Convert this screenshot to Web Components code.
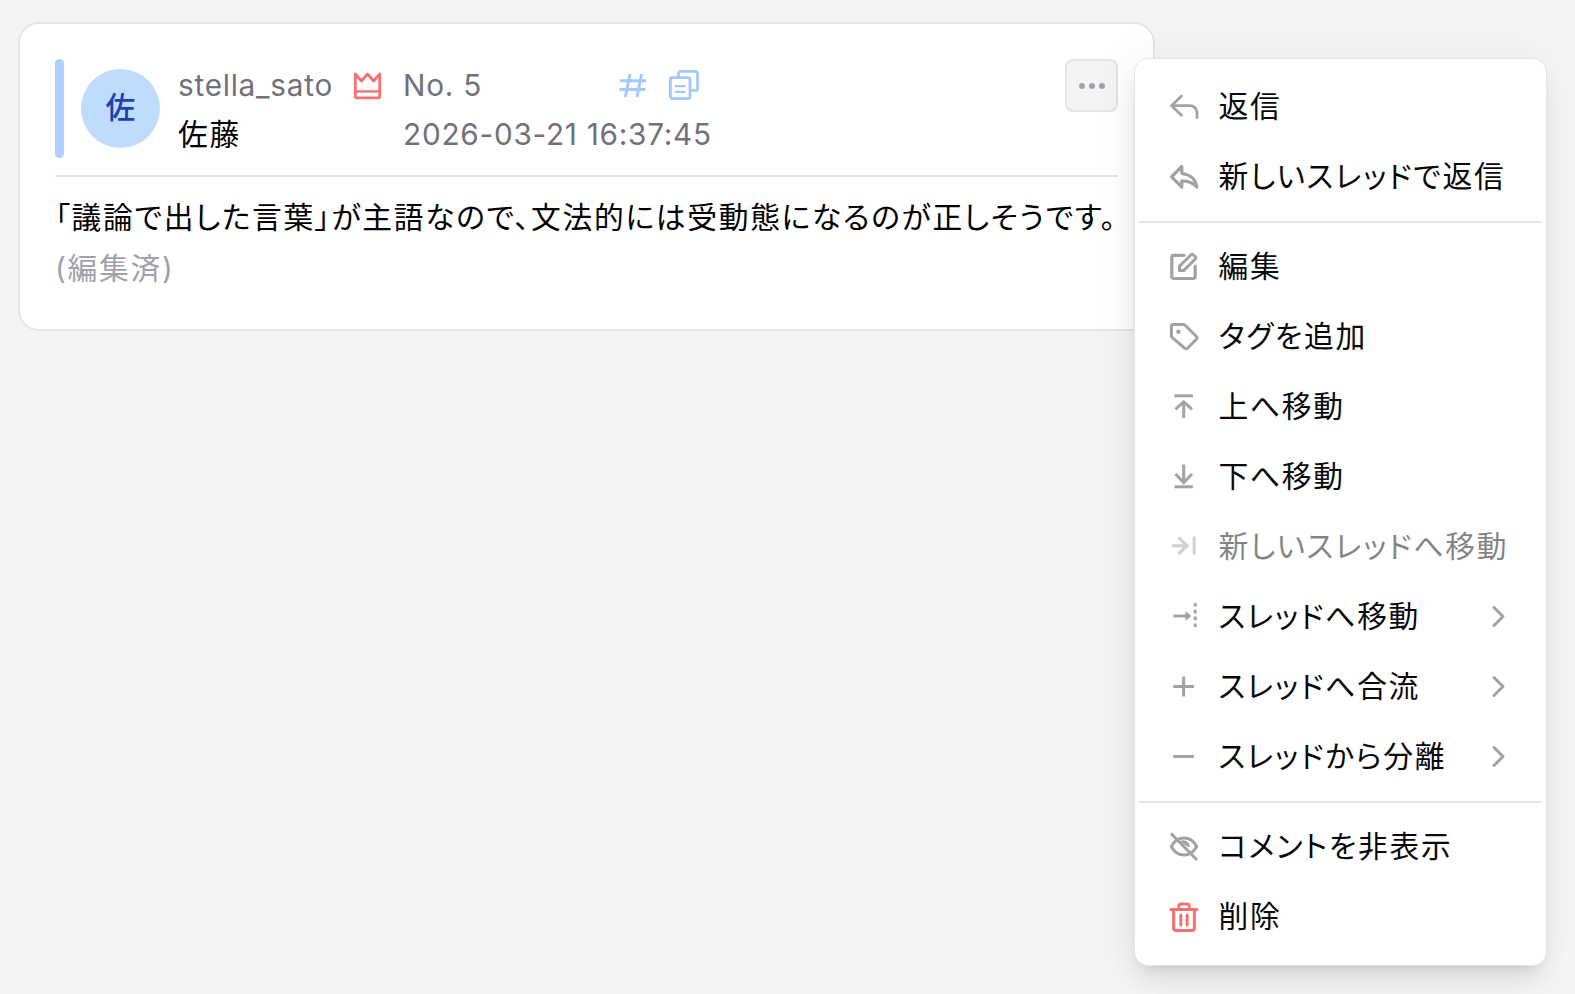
<!DOCTYPE html>
<html lang="ja">
<head>
<meta charset="utf-8">
<title>Comment menu</title>
<style>
html,body{margin:0;padding:0;background:#f4f4f5;}
body{font-family:Inter,"Noto Sans CJK JP",sans-serif;font-size:29.75px;letter-spacing:1.7px;font-feature-settings:"palt";color:#000;min-height:994px;overflow:hidden;}
</style>
</head>
<body>
<x-app>
  <x-comment-card>
    <x-comment-head slot="head"></x-comment-head>
    「議論で出した言葉」が主語なので、文法的には受動態になるのが正しそうです。
    <span slot="edited">(編集済)</span>
  </x-comment-card>
  <x-context-menu slot="overlay">
    <x-menu-item icon="reply">返信</x-menu-item>
    <x-menu-item icon="reply-thread">新しいスレッドで返信</x-menu-item>
    <x-menu-sep></x-menu-sep>
    <x-menu-item icon="edit">編集</x-menu-item>
    <x-menu-item icon="tag">タグを追加</x-menu-item>
    <x-menu-item icon="up">上へ移動</x-menu-item>
    <x-menu-item icon="down">下へ移動</x-menu-item>
    <x-menu-item icon="to-new" disabled>新しいスレッドへ移動</x-menu-item>
    <x-menu-item icon="to-thread" sub>スレッドへ移動</x-menu-item>
    <x-menu-item icon="plus" sub>スレッドへ合流</x-menu-item>
    <x-menu-item icon="minus" sub>スレッドから分離</x-menu-item>
    <x-menu-sep></x-menu-sep>
    <x-menu-item icon="eye-off">コメントを非表示</x-menu-item>
    <x-menu-item icon="trash" danger>削除</x-menu-item>
  </x-context-menu>
</x-app>
<script>
const ICONS={
reply:'<path d="M11.5 4 1.5 13.7l10 9.6M1.500 13.700H20a7 7 0 0 1 7 7v5" fill="none" stroke-width="2.800" stroke-linejoin="round" stroke-linecap="round"/>',
'reply-thread':'<path d="M11.800 4.500 1.500 14.800l10.300 10.200v-6.200c6 0 11 1.200 15 6.200-1-7-6-12.500-15-13.500z" fill="none" stroke-width="3.200" stroke-linejoin="round"/>',
edit:'<path d="M14 3.300H3.600a1.800 1.800 0 0 0-1.800 1.800v19.600a1.800 1.800 0 0 0 1.800 1.800h19.800a1.800 1.800 0 0 0 1.800-1.800V14" fill="none" stroke-width="3.200" stroke-linecap="round"/><path d="M9.500 18.600v-4.200L21 2.800a1.600 1.600 0 0 1 2.200 0l2 2a1.600 1.600 0 0 1 0 2.200L13.700 18.600z" fill="none" stroke-width="3" stroke-linejoin="round"/>',
tag:'<path d="M1.400 4.400a1.800 1.800 0 0 1 1.800-1.800h10.200a3 3 0 0 1 2 .9l10.800 10.700a2.400 2.400 0 0 1 0 3.300l-8.500 8.500a2.400 2.400 0 0 1-3.300 0L2.300 15.700a3 3 0 0 1-.9-2z" fill="none" stroke-width="3" stroke-linejoin="round"/><circle cx="8.400" cy="9.800" r="2.200" fill="currentColor" stroke="none"/>',
up:'<path d="M4.500 3.800h18.400" stroke-width="3"/><path d="M13.700 10v16M5.400 17.300l8.300-7.600 8.300 7.600" fill="none" stroke-width="3"/>',
down:'<path d="M13.700 2.500v18M5.400 12l8.300 8.500L22 12" fill="none" stroke-width="3"/><path d="M4.500 24.800h18.400" stroke-width="3"/>',
'to-new':'<path d="M2 13.700h15.500M8.500 5.500l8.700 8.200-8.700 8.200" fill="none" stroke-width="3"/><path d="M24.200 4.500v18" stroke-width="3"/>',
'to-thread':'<path d="M3.400 14h14" stroke-width="3"/><path d="M15.500 9l5.800 5-5.800 5z" fill="currentColor" stroke="none"/><path d="M25.200 1v26" stroke-width="3" stroke-dasharray="3.600 3.200"/>',
plus:'<path d="M3.300 14.500h20.600M13.600 4.500v20" stroke-width="3"/>',
minus:'<path d="M3.300 14.500h20.600" stroke-width="3"/>',
'eye-off':'<path d="M1.300 14.500c3-5.800 7.300-8.600 12.700-8.600s9.700 2.800 12.700 8.600c-3 5.800-7.300 8.600-12.700 8.600s-9.700-2.800-12.700-8.600z" fill="none" stroke-width="3"/><path d="M9.500 9.800a6 6 0 0 1 9.800 6L9 9z" fill="currentColor" stroke="none"/><path d="M1 1.500l26 26.500" stroke-width="3"/>',
trash:'<path d="M1 7.600h25.800" stroke-width="3" stroke-linecap="round"/><path d="M8.800 7.200V4a2 2 0 0 1 2-2h6.400a2 2 0 0 1 2 2v3.200" fill="none" stroke-width="2.800"/><path d="M3.600 8v18a2.600 2.600 0 0 0 2.600 2.600h15.600a2.600 2.600 0 0 0 2.600-2.600V8" fill="none" stroke-width="3"/><path d="M10.800 13v10M17.200 13v10" stroke-width="3" stroke-linecap="round"/>',
chev:'<path d="M2 1.500l9 9-9 9" fill="none" stroke-width="3" stroke-linecap="round" stroke-linejoin="round"/>',
crown:'<path d="M1.300 2 1.300 24.600a1.200 1.200 0 0 0 1.200 1.200h22a1.200 1.200 0 0 0 1.200-1.200V2L19.600 9 13.500 2 7.400 9z" fill="none" stroke-width="2.800" stroke-linejoin="round"/><path d="M1.300 19.400h24.400" stroke-width="2.400"/>',
hash:'<path d="M1 8.800h26M.4 17.400h26M11 2 6.400 25M22.600 2 18 25" fill="none" stroke-width="3"/>',
copy:'<path d="M9.500 7V3.400A2 2 0 0 1 11.500 1.400h15A2 2 0 0 1 28.500 3.400v15a2 2 0 0 1-2 2h-5.500" fill="none" stroke-width="2.800"/><rect x="1.400" y="7.600" width="19.600" height="21" rx="2" fill="none" stroke-width="2.800"/><path d="M6 16.200h10.500M6 21.800h10.500" stroke-width="2.200"/>'
};
class Base extends HTMLElement{
  constructor(){super();this.attachShadow({mode:'open'}).innerHTML=this.constructor.markup;}
}
customElements.define('x-icon',class extends HTMLElement{
  constructor(){super();this.attachShadow({mode:'open'});}
  connectedCallback(){
    const s=+(this.getAttribute('size')||28),w=+(this.getAttribute('w')||s),h=+(this.getAttribute('h')||s);
    this.shadowRoot.innerHTML=`<style>:host{display:block;width:${w}px;height:${h}px;flex:none}svg{display:block;overflow:visible;stroke:currentColor;stroke-width:2.4}</style><svg width="${w}" height="${h}" viewBox="0 0 ${w} ${h}" aria-hidden="true">${ICONS[this.getAttribute('name')]||''}</svg>`;
  }
});
customElements.define('x-app',class extends Base{static markup=`<style>:host{display:block;position:relative;width:1575px;height:994px;box-sizing:border-box;padding:22px 0 0 18px}
.overlay{position:absolute;left:1134px;top:58px}</style><slot></slot><div class="overlay"><slot name="overlay"></slot></div>`});
customElements.define('x-comment-card',class extends Base{static markup=`<style>
:host{display:block;width:1137px;height:309px;box-sizing:border-box;background:#fff;border:2px solid #e4e4e7;border-radius:21px;padding:35px}
.rule{height:2px;background:#e4e4e7;margin:17px 0 0}
.body{padding-top:16px;line-height:49px;white-space:nowrap}
.edited{color:#a1a1aa;line-height:49px;padding-top:2px}
</style><slot name="head"></slot><div class="rule"></div><div class="body"><slot></slot></div><div class="edited"><slot name="edited"></slot></div>`});
customElements.define('x-comment-head',class extends Base{static markup=`<style>
:host{display:flex;align-items:stretch;height:99px;position:relative}
.bar{width:9px;border-radius:5px;background:#afd0fc;flex:none}
.av{width:79px;height:79px;box-sizing:border-box;padding-bottom:8px;border-radius:50%;background:#bfdbfe;color:#1e40af;font-weight:500;display:flex;align-items:center;justify-content:center;flex:none;margin:10px 0 0 17px;letter-spacing:0}
.user{margin-left:18px;width:176px;flex:none;line-height:49px;padding-top:2px}
.name{color:#71717a;letter-spacing:.74px}
x-icon.crown{color:#f87171;margin:13px 0 0 0}
.meta{margin-left:22px;line-height:49px;color:#71717a;flex:none;padding-top:2px;letter-spacing:.74px}
.top{display:flex;align-items:center;height:49px}
.no{width:216px}
.hash{color:#a3c9fd;margin-top:-1px}
.copy{color:#a3c9fd;margin:-1px 0 0 23px}
.date{white-space:nowrap}
.btn{margin-left:auto;width:53px;height:53px;box-sizing:border-box;border:2px solid #e4e4e7;border-radius:8px;background:#f4f4f5;display:flex;align-items:center;justify-content:center;gap:4px}
.btn i{width:6px;height:6px;border-radius:50%;background:#a1a1aa;display:block}
</style><div class="bar"></div><div class="av">佐</div>
<div class="user"><div class="name">stella_sato</div><div>佐藤</div></div>
<x-icon class="crown" name="crown" w="27" h="27"></x-icon>
<div class="meta"><div class="top"><span class="no">No. 5</span><x-icon class="hash" name="hash" w="27" h="27"></x-icon><x-icon class="copy" name="copy" w="30" h="30"></x-icon></div><div class="date">2026-03-21 16:37:45</div></div>
<div class="btn"><i></i><i></i><i></i></div>`});
customElements.define('x-context-menu',class extends Base{static markup=`<style>
:host{display:block;width:413px;height:908px;box-sizing:border-box;background:#fff;border:1px solid #e4e4e7;border-radius:14px;padding:12px 4px 0;box-shadow:0 17.5px 26px -5px rgba(0,0,0,.1),0 7px 10.500px -7px rgba(0,0,0,.1),-8px 0 40px rgba(0,0,0,.05)}
</style><slot></slot>`});
customElements.define('x-menu-sep',class extends Base{static markup=`<style>:host{display:block;height:2px;background:#e4e4e7;margin:10px 0 8px}</style>`});
customElements.define('x-menu-item',class extends HTMLElement{
  constructor(){super();this.attachShadow({mode:'open'});}
  connectedCallback(){
    const sub=this.hasAttribute('sub');
    this.shadowRoot.innerHTML=`<style>
:host{display:flex;align-items:center;height:70px;padding-left:31px;color:#09090b;white-space:nowrap}
:host([disabled]){opacity:.5}
x-icon.i{color:#a1a1aa;margin-right:20.5px}
:host([danger]) x-icon.i{color:#f87171}
.t{flex:1;padding-bottom:4px}
x-icon.c{color:#a1a1aa;margin-right:37px}
</style><x-icon class="i" name="${this.getAttribute('icon')}"></x-icon><span class="t"><slot></slot></span>${sub?'<x-icon class="c" name="chev" w="13" h="21"></x-icon>':''}`;
  }
});
</script>
</body>
</html>
